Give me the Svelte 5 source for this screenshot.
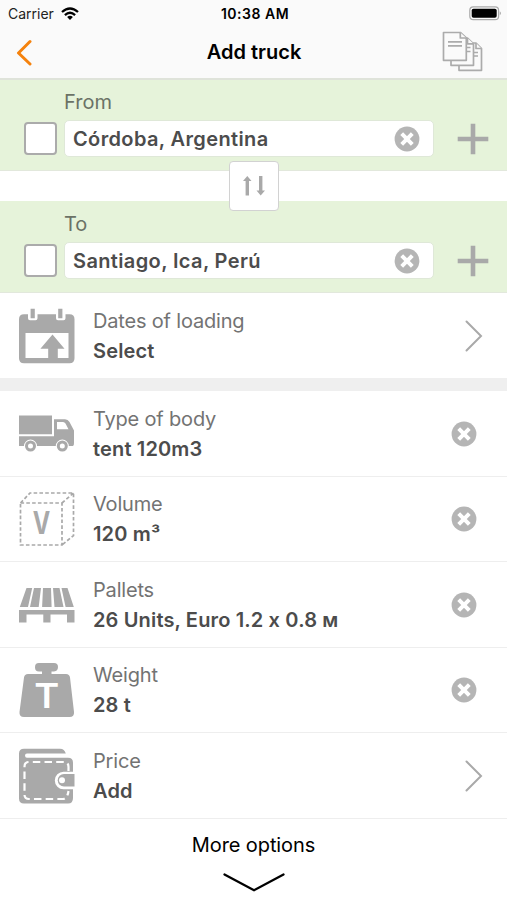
<script lang="ts">
  interface Place {
    label: string
    value: string
  }

  interface Option {
    icon: string
    label: string
    value: string
    filled: boolean
  }

  let places = $state<Place[]>([
    { label: 'From', value: 'Córdoba, Argentina' },
    { label: 'To', value: 'Santiago, Ica, Perú' }
  ])

  let options = $state<Option[]>([
    { icon: 'dates', label: 'Dates of loading', value: 'Select', filled: false },
    { icon: 'truck', label: 'Type of body', value: 'tent 120m3', filled: true },
    { icon: 'volume', label: 'Volume', value: '120 m³', filled: true },
    { icon: 'pallets', label: 'Pallets', value: '26 Units, Euro 1.2 x 0.8 м', filled: true },
    { icon: 'weight', label: 'Weight', value: '28 t', filled: true },
    { icon: 'price', label: 'Price', value: 'Add', filled: false }
  ])

  function swap() {
    const first = places[0].value
    places[0].value = places[1].value
    places[1].value = first
  }

  function clear(option: Option) {
    option.value = 'Add'
    option.filled = false
  }
</script>

{#snippet clearIcon()}
  <svg class="clear-icon" viewBox="0 0 26 26">
    <circle cx="13" cy="13" r="12.4" fill="#b5b5b5" />
    <path d="M7.7 7.7l10.6 10.6M18.3 7.7L7.7 18.3" stroke="#fff" stroke-width="4" />
  </svg>
{/snippet}

{#snippet optionIcon(name: string)}
  <svg class="option-icon" viewBox="0 0 56 56" fill="#a9a9a9">
    {#if name === 'dates'}
      <path fill-rule="evenodd" d="M4 6.3h5v3.9q0 2 2 2h5.500q2 0 2-2V6.300h18.500v3.900q0 2 2 2h5.500q2 0 2-2V6.300h4q5 0 5 5V50.200q0 5-5 5H5q-5 0-5-5V11.300q0-5 5-5zM6.500 25v25h22.700V40.800h-7.800L33.500 26.500l12 14.300h-6.700V50H49.500V25z" />
      <path d="M11.600.8h4.200v9.400h-4.200zM39.200.8h4.200v9.400h-4.200z" />
    {:else if name === 'truck'}
      <path d="M0 9.500h33v18.700H0z" />
      <path fill-rule="evenodd" d="M35 13.300h11q3 0 4.500 2.600L55 24.500V37q0 3-1 3h-4.200a6.500 6.500 0 0 0-13 0H18a6.500 6.500 0 0 0-13 0H0V30.200h35zM38 16v7.300h11.500l-3-5.800q-.8-1.500-2.500-1.500z" />
      <circle cx="11.500" cy="40" r="4" fill="none" stroke="#a9a9a9" stroke-width="3" />
      <circle cx="43.300" cy="40" r="4" fill="none" stroke="#a9a9a9" stroke-width="3" />
    {:else if name === 'volume'}
      <path d="M1.500 12h41.500v42H1.500zM1.500 12L11 2h43.500v42.500L43 54M43 12L54.500 2" fill="none" stroke="#a9a9a9" stroke-width="1.700" stroke-dasharray="3.600 2.200" />
      <text x="22.500" y="43" text-anchor="middle" class="cube-letter" textLength="17.500" lengthAdjust="spacingAndGlyphs">V</text>
    {:else if name === 'pallets'}
      <path d="M7.500 11h5.700L9 30H.800zM15 11h7l-2.300 19H11zM24 11h8l.6 19h-9.500zM34 11h6.500l4 19h-9zM42.500 11h6L54.800 30h-8.200z" />
      <path d="M0 33h55.500v12.500H48V37.500H31.500v8h-7.200v-8H7.500v8H0z" />
    {:else if name === 'weight'}
      <path fill-rule="evenodd" d="M20 1h15q4 0 4 4t-4 4.500h-2.500V12H47q3.500 0 4 3.500L55 50q.5 5-4.500 5H5Q0 55 .500 50L5 15.500Q5.500 12 9 12h14V9.500h-3q-4 0-4-4.300T20 1z" />
      <text x="27.800" y="46" text-anchor="middle" class="weight-letter" textLength="25" lengthAdjust="spacingAndGlyphs">T</text>
    {:else}
      <path d="M5 .7h36q4.500 0 5.800 4.700H8q-2 0-2 2.200t2 2.200h41q5 0 5 5v9H44.500a7.700 7.700 0 0 0 0 17.400H54V50q0 5.500-5 5.500H5q-5 0-5-5V5.500Q0 .7 5 .7z" />
      <path d="M45 26h10.500v12.500H45a6.200 6.200 0 0 1 0-12.500z" />
      <circle cx="43" cy="32.200" r="3" fill="#fff" />
      <path d="M49.500 23v-4q0-5-5-5H10q-4.500 0-4.500 4.500v28q0 4.500 4.500 4.500h34.500q4-1 5-8" fill="none" stroke="#fff" stroke-width="2.200" stroke-dasharray="7.500 4.200" />
    {/if}
  </svg>
{/snippet}

<div class="screen">
  <div class="status-bar">
    <div class="carrier">
      <span>Carrier</span>
      <svg class="wifi" viewBox="0 0 18 13" fill="none" stroke="#000" stroke-width="2.300">
        <path d="M1 5q8-7 16 0M3.900 8.100q5.100-4.600 10.200 0" />
        <path d="M6.100 10q2.900-2.400 5.800 0L9 12.900z" fill="#000" stroke="none" />
      </svg>
    </div>
    <span class="time">10:38 AM</span>
    <svg class="battery" viewBox="0 0 33 15">
      <rect x=".8" y=".8" width="28.800" height="12.900" rx="3.500" fill="none" stroke="#aaa" stroke-width="1.200" />
      <rect x="2.700" y="2.700" width="25" height="9.100" rx="1.800" />
      <path d="M30.800 5.300q2 2 0 4z" fill="#999" />
    </svg>
  </div>

  <header>
    <button class="back" aria-label="Back">
      <svg viewBox="0 0 18 28"><path d="M15 3.500L3.500 15 15 26" fill="none" stroke="#f5820d" stroke-width="3" stroke-linecap="round" stroke-linejoin="round" /></svg>
    </button>
    <h1>Add truck</h1>
    <button class="copy" aria-label="Templates">
      <svg viewBox="0 0 42 42" fill="#fafafa" stroke="#ababab" stroke-width="1.700" stroke-linejoin="round">
        <path d="M17 12h17l5.500 5.500V39.300H17z" />
        <path d="M34 12v5.500h5.500M32 21.500h4M32 25h4" />
        <path d="M9 7h16.500l6 5.800v21.500H9z" />
        <path d="M25.500 7v5.800h6M24 16.500h4.500M24 20.500h4.500" />
        <path d="M1.500 1.500h16.800l6 5.500v22.300H1.500z" />
        <path d="M18.300 1.500V7h6M6 10.800h14M6 14.800h14" />
      </svg>
    </button>
  </header>

  <section class="route">
    {#each places as place}
      <div class="place">
        <span class="place-label">{place.label}</span>
        <div class="place-row">
          <button class="checkbox" role="checkbox" aria-checked="false" aria-label={place.label}></button>
          <div class="field">
            <span class="value">{place.value}</span>
            <button aria-label="Clear" onclick={() => (place.value = '')}>{@render clearIcon()}</button>
          </div>
          <button class="plus" aria-label="Add point">
            <svg viewBox="0 0 32 32"><path d="M16 .7v30.600M.700 16h30.600" stroke="#a9a9a9" stroke-width="4.600" /></svg>
          </button>
        </div>
      </div>
    {/each}
    <button class="swap" aria-label="Swap places" onclick={swap}>
      <svg viewBox="0 0 24 22" fill="#a9a9a9">
        <path d="M5.300 1L9.500 6H7v14.500H3.600V6H1zM18.700 20.500l-4.200-5H17V1h3.400v14.500H23z" />
      </svg>
    </button>
  </section>

  <section class="options">
    {#each options as option}
      <div class="option" class:separated={option.icon === 'dates'}>
        {@render optionIcon(option.icon)}
        <div class="option-text">
          <span class="label">{option.label}</span>
          <span class="value">{option.value}</span>
        </div>
        {#if option.filled}
          <button class="clear" aria-label="Clear" onclick={() => clear(option)}>{@render clearIcon()}</button>
        {:else}
          <svg class="chevron" viewBox="0 0 18 32"><path d="M1.500 1.500L16 16 1.500 30.500" fill="none" stroke="#a9a9a9" stroke-width="2" stroke-linecap="round" /></svg>
        {/if}
      </div>
    {/each}
  </section>

  <button class="more">
    <span>More options</span>
    <svg viewBox="0 0 62 20"><path d="M1.500 1.500L31 17.300l29.500-15.800" fill="none" stroke="#000" stroke-width="2.300" stroke-linecap="round" /></svg>
  </button>
</div>

<style>
  :global(body) {
    margin: 0;
    background: #fff;
  }

  .screen {
    display: flex;
    flex-direction: column;
    width: 507px;
    height: 900px;
    overflow: hidden;
    background: #fff;
    color: #000;
    font-family: Inter, 'Liberation Sans', sans-serif;
    /* keeps the "x" between numbers a plain letter */
    font-feature-settings: 'calt' 0;
  }

  button {
    display: block;
    padding: 0;
    border: none;
    background: none;
    font: inherit;
    color: inherit;
    cursor: pointer;
  }

  svg {
    display: block;
    flex: none;
  }

  .status-bar {
    display: grid;
    grid-template-columns: 1fr auto 1fr;
    align-items: center;
    box-sizing: border-box;
    height: 27px;
    padding: 0 5px 0 8px;
    background: #fafafa;
    font-size: 14px;
  }

  .carrier {
    display: flex;
    align-items: center;
    gap: 7px;
    color: #222;
  }

  .wifi {
    width: 18px;
    height: 13px;
  }

  .time {
    font-weight: 600;
    letter-spacing: 0.5px;
  }

  .battery {
    justify-self: end;
    width: 33px;
    height: 15px;
  }

  header {
    display: grid;
    grid-template-columns: 1fr auto 1fr;
    align-items: center;
    box-sizing: border-box;
    height: 53px;
    padding: 0 23px 2px 15px;
    border-bottom: 2px solid #dfe3da;
    background: #fafafa;
  }

  .back svg {
    width: 18px;
    height: 28px;
  }

  h1 {
    margin: 0;
    padding-left: 9px;
    font-size: 20px;
    font-weight: 600;
  }

  .copy {
    justify-self: end;
  }

  .copy svg {
    width: 42px;
    height: 42px;
  }

  .route {
    position: relative;
    display: flex;
    flex-direction: column;
    gap: 30px;
  }

  .place {
    box-sizing: border-box;
    height: 91px;
    padding: 10px 18px 0 24px;
    border-bottom: 1px solid #e2e8dc;
    background: #e6f3da;
  }

  .place + .place {
    height: 92px;
    padding-top: 11px;
  }

  .place-label {
    display: block;
    padding-left: 40px;
    font-size: 20px;
    line-height: 24px;
    color: #6b7266;
  }

  .place-row {
    display: flex;
    align-items: center;
    margin-top: 6px;
  }

  .checkbox {
    box-sizing: border-box;
    width: 33px;
    height: 33px;
    border: 2px solid #ababab;
    border-radius: 4px;
    background: #fff;
  }

  .field {
    display: flex;
    align-items: center;
    justify-content: space-between;
    box-sizing: border-box;
    width: 370px;
    height: 37px;
    margin-left: 7px;
    padding: 0 13px 0 8px;
    border: 1px solid #dfe8d8;
    border-radius: 5px;
    background: #fff;
  }

  .clear-icon {
    width: 26px;
    height: 26px;
  }

  .plus {
    margin-left: auto;
  }

  .plus svg {
    width: 32px;
    height: 32px;
  }

  .swap {
    position: absolute;
    top: 81px;
    left: 229px;
    display: flex;
    align-items: center;
    justify-content: center;
    box-sizing: border-box;
    width: 50px;
    height: 50px;
    border: 1px solid #d2d2d2;
    border-radius: 4px;
    background: #fff;
  }

  .swap svg {
    width: 24px;
    height: 22px;
  }

  .option {
    display: flex;
    align-items: center;
    box-sizing: border-box;
    height: 85.5px;
    padding: 1px 24px 0 19px;
    border-bottom: 1.5px solid #eee;
  }

  .separated {
    height: 98px;
    padding-top: 0;
    border-bottom: 13px solid #efefef;
  }

  .option-icon {
    width: 56px;
    height: 56px;
  }

  .option-text {
    display: flex;
    flex: 1;
    flex-direction: column;
    margin-left: 18px;
    line-height: 30px;
  }

  .label {
    font-size: 20px;
    letter-spacing: -0.18px;
    color: #737373;
  }

  .value {
    font-size: 20px;
    font-weight: 600;
    letter-spacing: 0.15px;
    color: #4c4c4c;
  }

  .field .value {
    letter-spacing: 0.37px;
  }

  .clear {
    margin-right: 6px;
  }

  .chevron {
    width: 18px;
    height: 32px;
  }

  .cube-letter {
    font-size: 31px;
    font-weight: 700;
  }

  .weight-letter {
    font-size: 34px;
    font-weight: 600;
    fill: #fff;
  }

  .more {
    display: flex;
    flex-direction: column;
    align-items: center;
    padding-top: 14px;
    font-size: 20px;
    line-height: 24px;
    letter-spacing: -0.1px;
  }

  .more svg {
    width: 62px;
    height: 20px;
    margin-top: 16px;
  }
</style>
